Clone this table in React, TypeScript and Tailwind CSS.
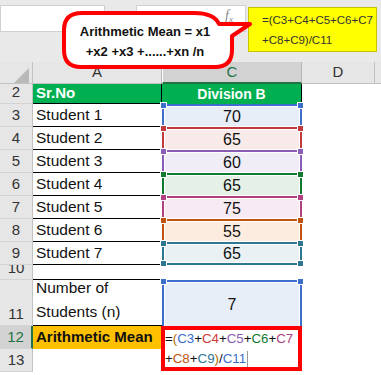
import React from "react";

type RangeCell = {
  row: number;
  name: string;
  v: string;
  border: string;
  fill: string;
  handle: string;
};

const ranges: RangeCell[] = [
  { row: 3, name: "Student 1", v: "70", border: "border-[#3b6fcb]", fill: "bg-[#e8eef8]", handle: "bg-[#3b6fcb]" },
  { row: 4, name: "Student 2", v: "65", border: "border-[#c0393b]", fill: "bg-[#f9eaea]", handle: "bg-[#c0393b]" },
  { row: 5, name: "Student 3", v: "60", border: "border-[#8a5cb8]", fill: "bg-[#f0edf7]", handle: "bg-[#8a5cb8]" },
  { row: 6, name: "Student 4", v: "65", border: "border-[#127a2e]", fill: "bg-[#e5f1e7]", handle: "bg-[#127a2e]" },
  { row: 7, name: "Student 5", v: "75", border: "border-[#b0407f]", fill: "bg-[#f7eaf2]", handle: "bg-[#b0407f]" },
  { row: 8, name: "Student 6", v: "55", border: "border-[#c0520c]", fill: "bg-[#fcece0]", handle: "bg-[#c0520c]" },
  { row: 9, name: "Student 7", v: "65", border: "border-[#2e7792]", fill: "bg-[#e9f1f4]", handle: "bg-[#2e7792]" },
];

function RowHead({ n, h, active }: { n: number; h: string; active?: boolean }) {
  return (
    <div
      className={`${h} w-[33px] shrink-0 overflow-hidden flex items-end justify-center text-[15px] leading-[22px] border-b border-[#d4d4d4] ${
        active
          ? "bg-[#d2d2d2] text-[#217346] border-r-2 border-r-[#217346]"
          : "bg-[#e6e6e6] text-[#333] border-r border-r-[#c2c2c2]"
      }`}
    >
      {n}
    </div>
  );
}

function Handle({ cls, side, bottom }: { cls: string; side: "l" | "r"; bottom?: boolean }) {
  return (
    <div
      className={`absolute z-10 w-[7px] h-[7px] border border-white ${cls} ${
        side === "l" ? "left-[-4px]" : "right-[-4px]"
      } ${bottom ? "bottom-[-4px]" : "top-[-4px]"}`}
    />
  );
}

export default function App() {
  return (
    <div className="relative w-[381px] h-[375px] overflow-hidden bg-white font-['Liberation_Sans',sans-serif] text-[#111]">
      {/* Formula bar */}
      <div className="h-[62px] bg-[#e9e9e9] flex items-start">
        <div className="mt-[5px] w-[105px] h-[27px] bg-white border border-[#d0d0d0]" />
        <div className="ml-[31px] mt-[5px] w-[110px] h-[27px] bg-white border border-[#d0d0d0] flex items-start justify-end pr-[12px] pt-[2px]">
          <span className="font-['Liberation_Serif',serif] italic text-[14px] leading-[16px] text-[#8a8a8a]">
            f<sub className="text-[9px]">x</sub>
          </span>
        </div>
        <div className="ml-[2px] mt-[7px] w-[129px] h-[45px] bg-[#ffff00] border border-[#c4c400] pl-[13px] pt-[2px] text-[11.5px] leading-[20px] text-[#333]">
          <div>=(C3+C4+C5+C6+C7</div>
          <div>+C8+C9)/C11</div>
        </div>
      </div>

      {/* Column header row */}
      <div className="flex h-[22px]">
        <div className="w-[33px] bg-[#e6e6e6] border-r border-[#c2c2c2] border-b border-b-[#c2c2c2] relative">
          <svg className="absolute left-[14px] top-[6px]" width="15" height="15" viewBox="0 0 15 15">
            <polygon points="15,0 15,15 0,15" fill="#b9b9b9" />
          </svg>
        </div>
        <div className="w-[129px] bg-[#e6e6e6] border-r border-[#b5b5b5] border-b border-b-[#c2c2c2] flex items-center justify-center text-[15px] text-[#333]">
          A
        </div>
        <div className="w-[140px] bg-[#d2d2d2] border-l border-white border-r border-r-[#b5b5b5] border-b-2 border-b-[#217346] flex items-center justify-center text-[15px] text-[#217346]">
          C
        </div>
        <div className="w-[73px] bg-[#e6e6e6] border-r border-[#c2c2c2] border-b border-b-[#c2c2c2] flex items-center justify-center text-[15px] text-[#333]">
          D
        </div>
        <div className="flex-1 bg-[#e6e6e6] border-b border-[#c2c2c2]" />
      </div>

      {/* Row 2 */}
      <div className="flex h-[20px]">
        <RowHead n={2} h="h-[20px]" />
        <div className="w-[129px] bg-[#00b050] border-r border-black border-b border-b-black flex items-center pl-[3px] text-white font-bold text-[15px]">
          Sr.No
        </div>
        <div className="w-[140px] bg-[#00b050] border-r border-black flex items-center justify-center text-white font-bold text-[14px]">
          Division B
        </div>
        <div className="flex-1" />
      </div>

      {/* Rows 3-9 */}
      {ranges.map((r, i) => (
        <div key={r.row} className="flex h-[23px]">
          <RowHead n={r.row} h="h-[23px]" />
          <div className="w-[129px] border-b border-black flex items-center pl-[3px] text-[15.5px]">{r.name}</div>
          <div
            className={`relative w-[140px] h-[23px] border-t-2 border-x-2 ${i === ranges.length - 1 ? "border-b-2" : ""} ${r.border} bg-white p-px`}
          >
            <div className={`h-full ${r.fill} flex items-center justify-center text-[16px]`}>{r.v}</div>
            <Handle cls={r.handle} side="l" />
            <Handle cls={r.handle} side="r" />
            {i === ranges.length - 1 && (
              <>
                <Handle cls={r.handle} side="l" bottom />
                <Handle cls={r.handle} side="r" bottom />
              </>
            )}
          </div>
          <div className="flex-1" />
        </div>
      ))}

      {/* Row 10 */}
      <div className="flex h-[15px]">
        <RowHead n={10} h="h-[15px]" />
        <div className="w-[129px] border-b border-black" />
        <div className="w-[140px]" />
        <div className="flex-1" />
      </div>

      {/* Row 11 */}
      <div className="flex h-[46px]">
        <RowHead n={11} h="h-[46px]" />
        <div className="w-[129px] border-b border-black flex flex-col justify-end pl-[3px] pb-[1px] text-[15.5px] leading-[24px]">
          <div>Number of</div>
          <div>Students (n)</div>
        </div>
        <div className="relative w-[140px] h-[46px] border-t-2 border-x-2 border-[#3b6fcb] bg-white px-px pt-px">
          <div className="h-full bg-[#e8eef8] flex items-center justify-center text-[16px]">7</div>
          <Handle cls="bg-[#3b6fcb]" side="l" />
          <Handle cls="bg-[#3b6fcb]" side="r" />
        </div>
        <div className="flex-1" />
      </div>

      {/* Rows 12-13 */}
      <div className="flex h-[46px]">
        <div className="flex flex-col">
          <RowHead n={12} h="h-[23px]" active />
          <RowHead n={13} h="h-[23px]" />
        </div>
        <div className="flex flex-col w-[129px]">
          <div className="h-[23px] bg-[#ffc000] flex items-center pl-[3px] font-bold text-[15px]">
            Arithmetic Mean
          </div>
          <div className="h-[23px]" />
        </div>
        <div className="w-[141px] h-[45px] border-4 border-[#ff0000] bg-white text-[13.3px] leading-[20px] ml-[-1px] flex flex-col justify-center">
          <div className="whitespace-nowrap">
            <span>=</span>
            <span className="text-[#b36b00]">(</span>
            <span className="text-[#3b6fcb]">C3</span>+<span className="text-[#d0383b]">C4</span>+
            <span className="text-[#8a5cb8]">C5</span>+<span className="text-[#127a2e]">C6</span>+
            <span className="text-[#b0407f]">C7</span>
          </div>
          <div className="whitespace-nowrap flex items-center">
            <span>+</span>
            <span className="text-[#c0520c]">C8</span>+<span className="text-[#2e7792]">C9</span>
            <span className="text-[#b36b00]">)</span>/<span className="text-[#3b6fcb]">C11</span>
            <span className="inline-block w-px h-[16px] bg-[#999] ml-[1px]" />
          </div>
        </div>
        <div className="flex-1" />
      </div>

      {/* Callout */}
      <div className="absolute left-[60px] top-[8px] w-[195px] h-[64px]">
        <svg className="absolute inset-0" width="195" height="64" viewBox="0 0 195 64">
          <path
            d="M 22,5 L 134,5 Q 154,5 159,16 L 190,16 L 172,28 L 172,42 Q 172,59 155,59 L 21,59 Q 4,59 4,42 L 4,22 Q 4,5 22,5 Z"
            fill="#ffffff"
            stroke="#ff0000"
            strokeWidth="4"
            strokeLinejoin="round"
          />
        </svg>
        <div className="absolute left-[2px] top-[14px] w-[166px] text-center font-bold text-[13px] leading-[20px] text-[#111] whitespace-nowrap">
          <div>Arithmetic Mean = x1</div>
          <div>+x2 +x3 +......+xn /n</div>
        </div>
      </div>
    </div>
  );
}
